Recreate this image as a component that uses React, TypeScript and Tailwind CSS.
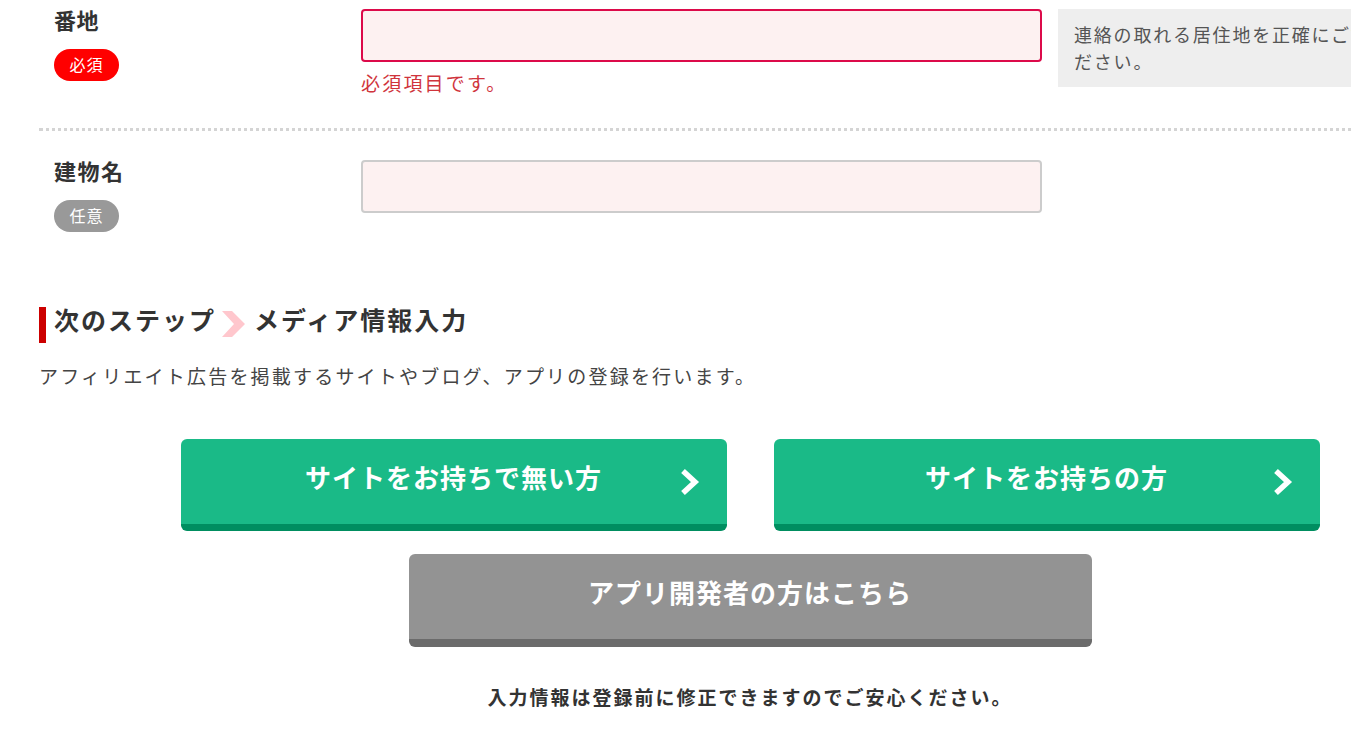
import React from 'react';

const font = { fontFamily: '"Noto Sans CJK JP", "Noto Sans", sans-serif' };

const Badge: React.FC<{ required?: boolean }> = ({ required }) => (
  <span
    className={`mt-[20px] flex h-[32px] w-[65px] items-center justify-center rounded-full pb-[2px] text-[16px] leading-none tracking-[1px] text-white ${
      required ? 'bg-[#ff0000]' : 'bg-[#999999]'
    }`}
  >
    {required ? '必須' : '任意'}
  </span>
);

const Chevron: React.FC = () => (
  <svg className="absolute right-[25px] top-[29px]" width="24" height="28" viewBox="0 0 24 28">
    <polyline
      points="5,3 17,14 5,25"
      fill="none"
      stroke="white"
      strokeWidth="5.5"
      strokeLinejoin="miter"
    />
  </svg>
);

export default function App() {
  return (
    <div className="h-[733px] w-full overflow-hidden bg-white text-[#333333]" style={font}>
      <div className="ml-[39px] w-[1422px]">
        {/* 番地 */}
        <div className="flex border-b-[3px] border-dotted border-[#d4d4d4] pb-[33px] pt-[9px]">
          <div className="w-[322px] pl-[15px]">
            <div className="text-[22px] font-bold leading-[20px] tracking-[0.5px]">番地</div>
            <Badge required />
          </div>
          <div className="w-[681px]">
            <div className="h-[53px] rounded-[4px] border-2 border-[#dc0a4a] bg-[#fdf1f1]" />
            <p className="mt-[9px] text-[19px] leading-[24px] tracking-[2.2px] text-[#d0343c]">必須項目です。</p>
          </div>
          <div className="ml-[16px] w-[380px] shrink-0 self-start bg-[#eeeeee] px-[16px] py-[12px] text-[18px] leading-[27px] tracking-[1.8px] text-[#555555]">
            連絡の取れる居住地を正確にご記入ください。
          </div>
        </div>

        {/* 建物名 */}
        <div className="flex pt-[29px]">
          <div className="w-[322px] pl-[15px]">
            <div className="text-[22px] font-bold leading-[20px] tracking-[1.5px]">建物名</div>
            <Badge />
          </div>
          <div className="w-[681px]">
            <div className="h-[53px] rounded-[4px] border-2 border-[#cccccc] bg-[#fdf1f1]" />
          </div>
        </div>

        {/* 次のステップ */}
        <div className="mt-[75px] flex h-[36px] items-center border-l-[7px] border-[#cc0000] pb-[10px] pl-[8px] text-[25px] font-bold tracking-[2px]">
          <span>次のステップ</span>
          <svg className="ml-[6px] mr-[9px] mt-[8px]" width="23" height="26" viewBox="0 0 23 26">
            <polygon points="0,0 10,0 23,13 10,26 0,26 12,13" fill="#ffc7cd" />
          </svg>
          <span>メディア情報入力</span>
        </div>
        <p className="mt-[19px] text-[19px] leading-[28px] tracking-[2.2px] text-[#444444]">
          アフィリエイト広告を掲載するサイトやブログ、アプリの登録を行います。
        </p>

        <div className="mt-[49px] flex justify-center gap-[47px]">
          {['サイトをお持ちで無い方', 'サイトをお持ちの方'].map((label) => (
            <button
              key={label}
              className="relative flex h-[92px] w-[546px] items-center justify-center rounded-[6px] border-b-[7px] border-[#008e60] bg-[#1aba87] pb-[10px] text-[26px] font-bold tracking-[1px] text-white"
            >
              {label}
              <Chevron />
            </button>
          ))}
        </div>

        <div className="mt-[23px] flex justify-center">
          <button className="flex h-[93px] w-[683px] items-center justify-center rounded-[6px] border-b-[8px] border-[#6b6b6b] bg-[#939393] pb-[10px] text-[26px] font-bold tracking-[1px] text-white">
            アプリ開発者の方はこちら
          </button>
        </div>

        <p className="mt-[36px] text-center text-[19px] font-bold leading-[28px] tracking-[2px]">
          入力情報は登録前に修正できますのでご安心ください。
        </p>
      </div>
    </div>
  );
}
